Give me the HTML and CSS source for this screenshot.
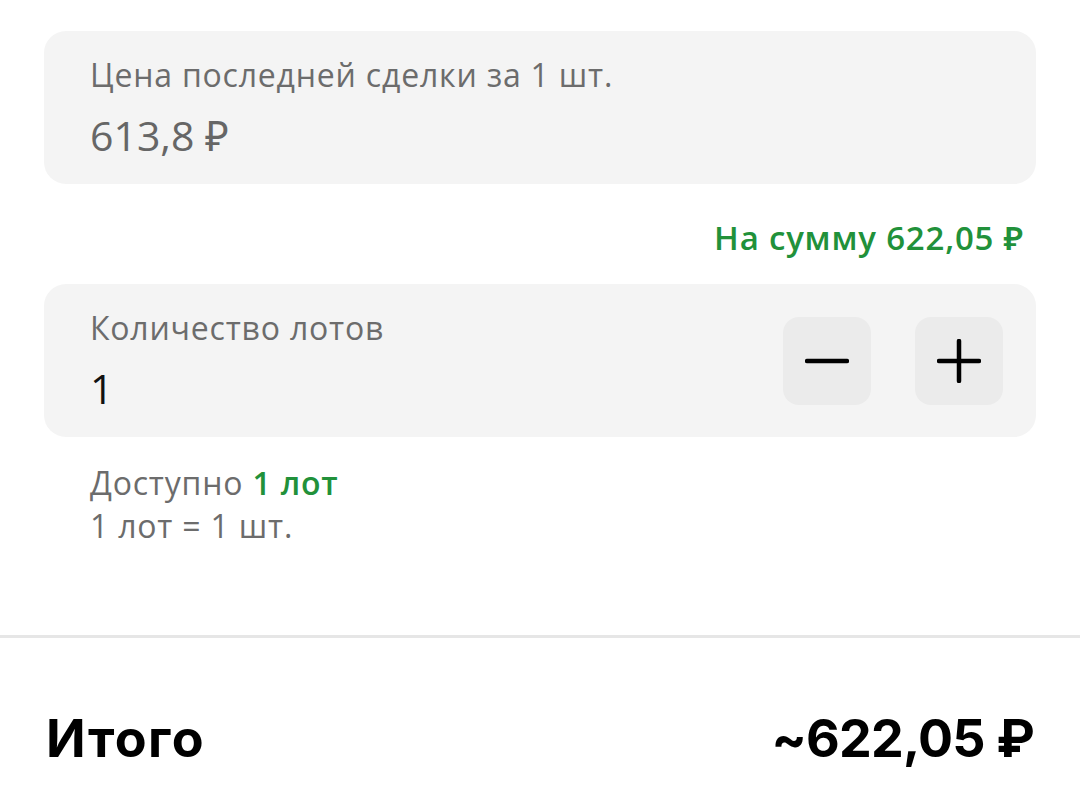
FILE: index.html
```html
<!DOCTYPE html>
<html lang="ru">
<head>
<meta charset="utf-8">
<link rel="stylesheet" href="styles.css">
</head>
<body>
<div class="page">
  <div class="content">
    <div class="card">
      <div class="card-text">
        <div class="label">Цена последней сделки за 1 шт.</div>
        <div class="value muted">613,8 ₽</div>
      </div>
    </div>
    <div class="sum">На сумму 622,05 ₽</div>
    <div class="card">
      <div class="card-text">
        <div class="label">Количество лотов</div>
        <div class="value">1</div>
      </div>
      <div class="steppers">
        <button class="step" aria-label="Уменьшить">
          <svg width="44" height="44" viewBox="0 0 44 44"><path d="M2 22H42" stroke="#000" stroke-width="4.5" stroke-linecap="round"/></svg>
        </button>
        <button class="step" aria-label="Увеличить">
          <svg width="44" height="44" viewBox="0 0 44 44"><path d="M2 22H42M22 2V42" stroke="#000" stroke-width="4.5" stroke-linecap="round"/></svg>
        </button>
      </div>
    </div>
    <div class="info">
      <div>Доступно <span class="green">1 лот</span></div>
      <div>1 лот = 1 шт.</div>
    </div>
  </div>
  <div class="divider"></div>
  <div class="total">
    <span class="total-label">Итого</span>
    <span class="total-value">~622,05 ₽</span>
  </div>
</div>
</body>
</html>
```

FILE: styles.css
```css
html, body {
  margin: 0;
  padding: 0;
  background: #fff;
}
body {
  font-family: "Open Sans", "Noto Sans", sans-serif;
  width: 1080px;
  height: 793px;
  overflow: hidden;
}
.content {
  padding: 31px 44px 0 44px;
}
.card {
  background: #f4f4f4;
  border-radius: 22px;
  height: 153px;
  box-sizing: border-box;
  padding: 0 33px 0 46px;
  display: flex;
  align-items: center;
  justify-content: space-between;
}
.card-text {
  display: flex;
  flex-direction: column;
  gap: 18px;
}
.label {
  font-size: 32px;
  letter-spacing: 0.8px;
  line-height: 36px;
  color: #6c6c6c;
}
.value {
  font-size: 41px;
  line-height: 48px;
  color: #111;
}
.value.muted {
  color: #666;
}
.sum {
  text-align: right;
  padding: 34px 12px 0 0;
  height: 100px;
  box-sizing: border-box;
  font-size: 33px;
  letter-spacing: 0.8px;
  line-height: 40px;
  font-weight: 600;
  color: #21913a;
}
.steppers {
  display: flex;
  gap: 44px;
}
.step {
  width: 88px;
  height: 88px;
  border: none;
  border-radius: 16px;
  background: #ebebeb;
  display: flex;
  align-items: center;
  justify-content: center;
  padding: 0;
}
.info {
  padding: 24px 0 0 46px;
  font-size: 32px;
  letter-spacing: 0.8px;
  line-height: 43px;
  color: #6c6c6c;
}
.green {
  color: #21913a;
  font-weight: 600;
}
.divider {
  margin-top: 88px;
  height: 3px;
  background: #e6e6e6;
}
.total {
  display: flex;
  justify-content: space-between;
  align-items: center;
  padding: 73px 46px 0 46px;
  font-family: Inter, "Noto Sans", sans-serif;
  font-weight: 700;
  font-size: 52px;
  line-height: 56px;
  color: #000;
}
.total-label {
  letter-spacing: 1.5px;
}
.total-value {
  letter-spacing: -0.8px;
}
```
